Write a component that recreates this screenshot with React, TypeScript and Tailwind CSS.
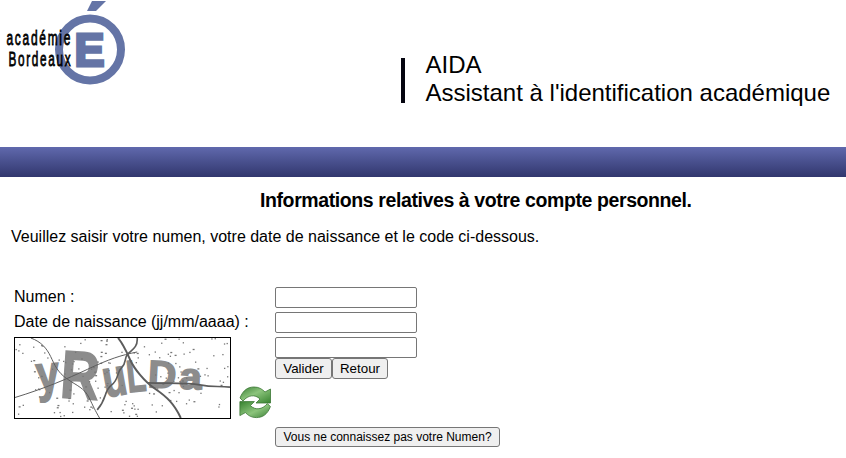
import type { ReactNode } from "react";

function Logo() {
  return (
    <svg width="132" height="90" viewBox="0 0 132 90" className="block">
      <circle cx="90" cy="49.5" r="31" fill="none" stroke="#6474a6" strokeWidth="8" />
      <path d="M92 1h14l-10 10h-9z" fill="#6474a6" />
      <text
        x="74.5"
        y="65.5"
        textLength="30"
        lengthAdjust="spacingAndGlyphs"
        className="fill-[#6474a6] stroke-[#6474a6] stroke-[3px] text-[47px] font-bold [font-family:'Liberation_Sans',sans-serif]"
      >
        E
      </text>
      <g className="fill-black stroke-black stroke-[0.8px] text-[21px] tracking-[3px] [font-family:'Liberation_Sans',sans-serif]">
        <text transform="translate(6.5 44.7) scale(.57 1)">académie</text>
        <text transform="translate(8.5 65.9) scale(.56 1)">Bordeaux</text>
      </g>
    </svg>
  );
}

// Speckles spread over the code image
const dots = Array.from({ length: 170 }, (_, i) => {
  const a = Math.sin(i * 12.9898 + 4.1) * 43758.5453;
  const b = Math.sin(i * 78.233 + 1.7) * 24634.6345;
  return { x: (a - Math.floor(a)) * 645, y: (b - Math.floor(b)) * 240 };
});

const letters = [
  { char: "y", size: 150, transform: "translate(68 166) rotate(-5) scale(.84 1.05)" },
  { char: "R", size: 208, transform: "translate(134 182) rotate(4) scale(.78 1)" },
  { char: "u", size: 162, transform: "translate(275 183) rotate(-10) scale(.72 1)" },
  { char: "L", size: 138, transform: "translate(343 167) rotate(-6) scale(.68 1)" },
  { char: "D", size: 118, transform: "translate(401 151) rotate(3) scale(1 1)" },
  { char: "a", size: 112, transform: "translate(497 155) rotate(2) scale(1.07 1)" },
];

function CodeImage() {
  return (
    <svg
      viewBox="0 0 651 246"
      className="block h-[82px] w-[217px] border border-black bg-white"
      preserveAspectRatio="none"
    >
      <g className="fill-[#8c8c8c] stroke-[#8c8c8c] stroke-[5px] font-bold [font-family:'Liberation_Sans',sans-serif]">
        {letters.map((letter) => (
          <text key={letter.char} fontSize={letter.size} transform={letter.transform}>
            {letter.char}
          </text>
        ))}
      </g>
      {dots.map((dot, i) => (
        <rect key={i} x={dot.x} y={dot.y} width={i % 4 ? 4 : 6} height="4" fill="#777" />
      ))}
      <g fill="none" stroke="#5c5c5c">
        <path d="M0 183C90 155 155 127 220 96S320 53 370 43" strokeWidth="3" />
        <path d="M48 0C80 12 96 32 108 57S128 105 158 126S210 154 224 183S242 222 256 246" strokeWidth="3" />
        <path d="M312 0C330 22 340 48 350 70S390 133 425 157S482 203 502 246" strokeWidth="6" />
        <path d="M370 0C372 28 355 36 342 49S339 76 323 91S316 126 292 145S280 184 249 221" strokeWidth="5" />
        <path d="M402 138C470 140 520 136 560 144S612 147 651 151" strokeWidth="5" />
      </g>
    </svg>
  );
}

function RefreshIcon() {
  const arrow = "M1 13C4 5 9 2 15 2C20 2 23 4 26 7L31.5 4V18H17L21 14C16 9 9 10 4 16Z";
  return (
    <svg width="34" height="34" viewBox="0 0 34 34" className="block">
      <defs>
        <linearGradient id="refresh" x1="0" y1="0" x2="1" y2="1">
          <stop offset="0" stopColor="#397f35" />
          <stop offset="0.45" stopColor="#8cc47c" />
          <stop offset="1" stopColor="#37832f" />
        </linearGradient>
      </defs>
      <g fill="url(#refresh)" stroke="#3a7634" strokeWidth="0.8" strokeLinejoin="round">
        <path d={arrow} />
        <path d={arrow} transform="rotate(180 16.2 17.3)" />
      </g>
    </svg>
  );
}

function Button({ className, children }: { className: string; children: ReactNode }) {
  return (
    <button
      type="button"
      className={`shrink-0 whitespace-nowrap rounded-[3px] border border-[#767676] bg-[#efefef] ${className}`}
    >
      {children}
    </button>
  );
}

function Field({ label }: { label: string }) {
  return (
    <input
      type="text"
      aria-label={label}
      className="block h-[21px] w-[142px] rounded-[2px] border border-[#767676] bg-white px-1"
    />
  );
}

export default function App() {
  return (
    <div className="h-[458px] w-[846px] overflow-hidden bg-white text-base text-black [font-family:'Liberation_Sans',Arial,sans-serif]">
      <header className="flex h-[147px] items-start">
        <Logo />
        <div className="ml-[269px] mt-[58px] h-[45px] w-1 bg-[#050510]" />
        <div className="ml-[20.5px] mt-[51px] whitespace-nowrap text-[24px] leading-7">
          <div>AIDA</div>
          <div>Assistant à l'identification académique</div>
        </div>
      </header>
      <div className="h-[30px] bg-linear-to-b from-[#6069ad] to-[#32376e]" />

      <main>
        <h1 className="pl-[260px] pt-3 text-[19.5px] font-bold leading-[22px] tracking-[-0.4px]">
          Informations relatives à votre compte personnel.
        </h1>
        <p className="pl-[11px] pt-[17px] leading-[18px]">
          Veuillez saisir votre numen, votre date de naissance et le code ci-dessous.
        </p>
        <form className="flex pl-[14px] pt-[41px]">
          <div className="w-[261px]">
            <div className="h-[25px] leading-[19px]">Numen :</div>
            <div className="h-[25px] leading-[19px]">Date de naissance (jj/mm/aaaa) :</div>
            <div className="flex items-end gap-2">
              <CodeImage />
              <RefreshIcon />
            </div>
          </div>
          <div>
            <div className="flex flex-col gap-1">
              <Field label="Numen" />
              <Field label="Date de naissance" />
              <Field label="Code" />
            </div>
            <div className="flex text-[13.33px] leading-[19px]">
              <Button className="h-[21px] w-[57px]">Valider</Button>
              <Button className="h-[21px] w-[56px]">Retour</Button>
            </div>
            <div className="flex pt-12 text-[12px] leading-[18px]">
              <Button className="h-5 w-[225px]">Vous ne connaissez pas votre Numen?</Button>
            </div>
          </div>
        </form>
      </main>
    </div>
  );
}
